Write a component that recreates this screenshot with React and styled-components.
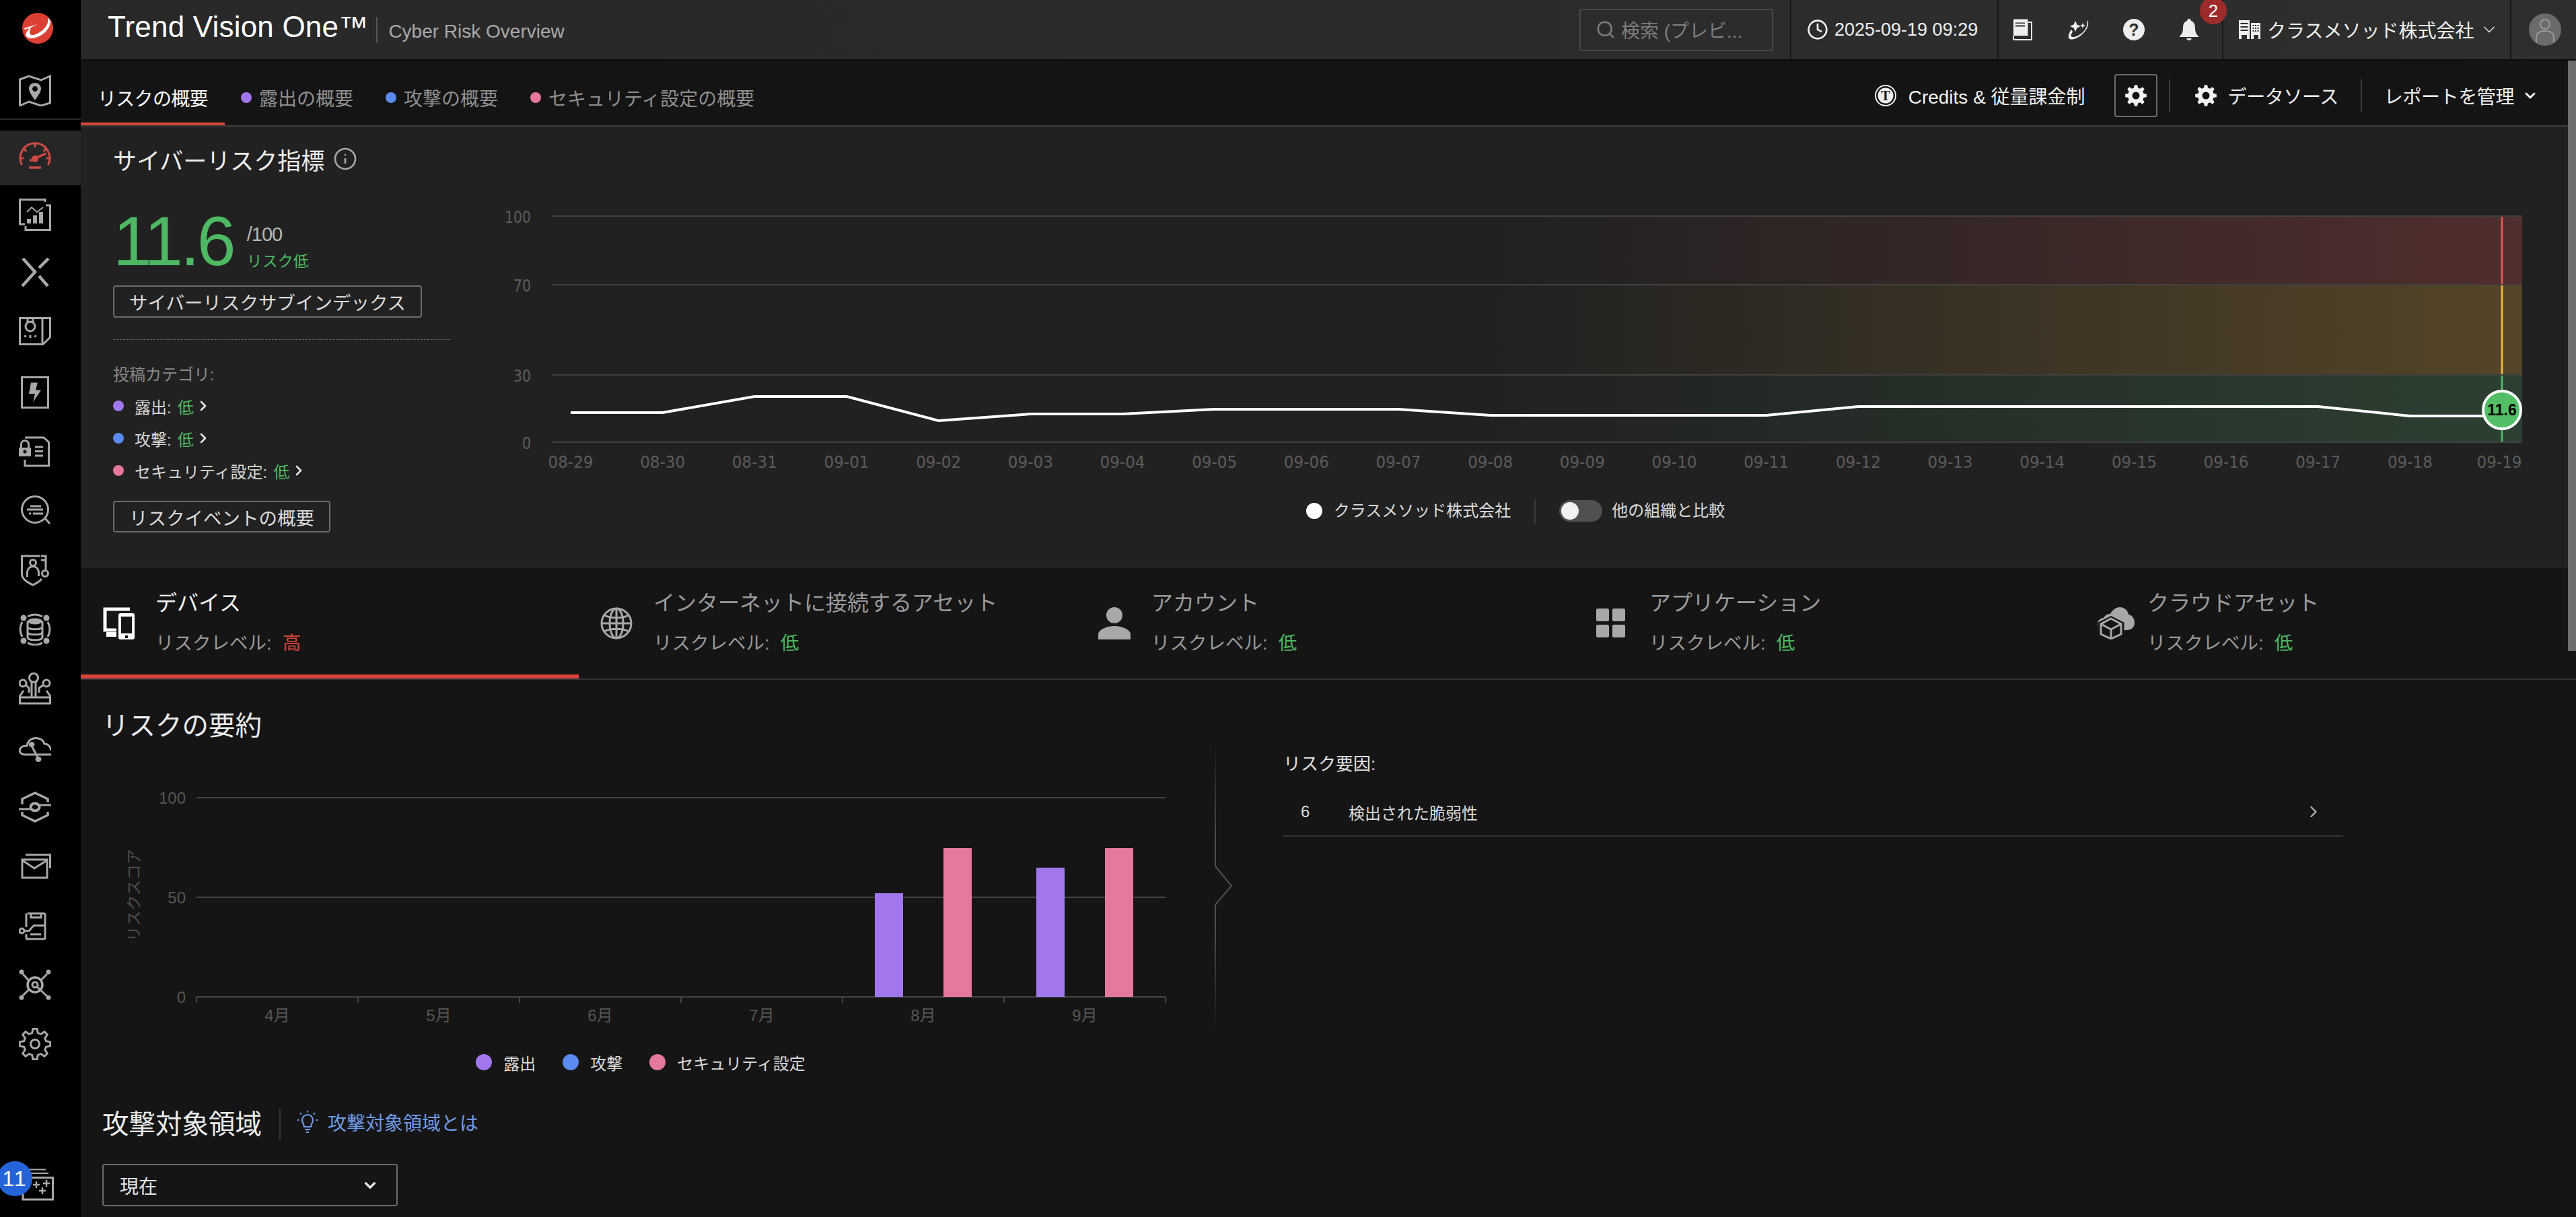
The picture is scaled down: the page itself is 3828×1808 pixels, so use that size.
import React from 'react';
import styled, { createGlobalStyle } from 'styled-components';
import { ChevronDown, ChevronRight, Search, Clock, Info } from 'lucide-react';

const GlobalStyle = createGlobalStyle`
    html, body {
        margin: 0;
        padding: 0;
        background: #151515;
        overflow: hidden;
    }
    * { box-sizing: border-box; }
    body {
        font-family: "Liberation Sans", "Noto Sans CJK JP", sans-serif;
        color: #e6e6e6;
    }
`;

const PURPLE = '#a277ee';
const BLUE = '#5b8af0';
const PINK = '#e5789f';
const GREEN = '#4eb862';
const RED = '#d9453b';

const Page = styled.div`
    display: flex;
    width: 3828px;
    height: 1808px;
    overflow: hidden;
    position: relative;
`;

/* sidebar */
const Sidebar = styled.nav`
    width: 120px;
    height: 1808px;
    flex: none;
    background: #000;
    display: flex;
    flex-direction: column;
    color: #a8a8a8;
`;
const LogoSlot = styled.div`
    height: 84px;
    display: flex;
    align-items: center;
    padding-left: 33px;
`;
const PinnedSlot = styled.div`
    height: 92px;
    padding-top: 8px;
    display: flex;
    align-items: center;
    padding-left: 28px;
`;
const SideRule = styled.div`
    height: 2px;
    background: #2a2a2a;
    margin-bottom: 16px;
`;
const ActiveSlot = styled.div`
    height: 81px;
    padding: 0 0 1px 28px;
    display: flex;
    align-items: center;
    background: #262626;
    color: #cf4b45;
`;
const NavSlot = styled.div`
    height: 88px;
    display: flex;
    align-items: center;
    padding-left: 28px;
`;
const TraySlot = styled.div`
    margin-top: auto;
    padding: 0 0 24px 32px;
    position: relative;
`;
const TrayBadge = styled.div`
    position: absolute;
    left: -4px;
    top: -11px;
    width: 52px;
    height: 52px;
    border-radius: 50%;
    background: #2563d8;
    color: #fff;
    font-size: 32px;
    line-height: 52px;
    text-align: center;
    letter-spacing: 2px;
`;
const NavIcon = styled.svg.attrs({ viewBox: '0 0 48 48', width: 48, height: 48 })`
    display: block;
    fill: none;
    stroke: currentColor;
    stroke-width: 3;
`;

/* top bar */
const Main = styled.div`
    flex: 1;
    min-width: 0;
    display: flex;
    flex-direction: column;
`;
const TopBar = styled.header`
    height: 90px;
    flex: none;
    display: flex;
    align-items: stretch;
    background: linear-gradient(90deg, #282828, #2e2e2e);
    border-bottom: 2px solid #0d0d0d;
    padding-left: 40px;
`;
const Brand = styled.div`
    display: flex;
    align-items: center;
    flex: 1;
`;
const BrandName = styled.div`
    font-size: 44px;
    line-height: 50px;
    color: #fff;
    letter-spacing: 0.2px;
    margin-top: -8px;
`;
const BrandRule = styled.div`
    width: 2px;
    height: 39px;
    background: #555;
    margin: 0 16px 0 12px;
`;
const BrandPage = styled.div`
    font-size: 28px;
    color: #a9a9a9;
    margin-top: 5px;
`;
const TopCell = styled.div`
    display: flex;
    align-items: center;
    border-right: 2px solid #171717;
    width: ${(p) => p.$w}px;
    padding-left: ${(p) => p.$pad || 0}px;
    gap: ${(p) => p.$gap || 0}px;
    flex: none;
    &:last-child { border-right: 0; }
`;
const SearchBox = styled.div`
    width: 288px;
    height: 63px;
    border: 2px solid #484848;
    border-radius: 4px;
    display: flex;
    align-items: center;
    padding-left: 22px;
    gap: 8px;
    color: #7d7d7d;
    font-size: 28px;
    white-space: nowrap;
`;
const DateText = styled.span`
    font-size: 27px;
    color: #f0f0f0;
    white-space: nowrap;
`;
const TopIcon = styled.div`
    width: 32px;
    height: 32px;
    position: relative;
    flex: none;
    color: #eee;
`;
const NoticeBadge = styled.div`
    position: absolute;
    left: 32px;
    top: -32px;
    width: 40px;
    height: 40px;
    border-radius: 50%;
    background: #9c2b2a;
    color: #fff;
    font-size: 26px;
    line-height: 40px;
    text-align: center;
`;
const OrgName = styled.span`
    font-size: 28px;
    color: #f0f0f0;
    white-space: nowrap;
`;

/* sub navigation */
const SubNav = styled.div`
    height: 98px;
    flex: none;
    display: flex;
    background: #141414;
    border-bottom: 2px solid #3c3c3c;
`;
const ViewTab = styled.div`
    display: flex;
    align-items: center;
    gap: 11px;
    padding: 14px 24px 0;
    font-size: 28px;
    color: ${(p) => (p.$active ? '#fff' : '#8f8f8f')};
    box-shadow: ${(p) => (p.$active ? `inset 0 -4px 0 ${RED}` : 'none')};
    ${(p) => p.$active && 'width: 214px; padding-left: 25px; letter-spacing: -0.7px;'}
    white-space: nowrap;
`;
const Dot = styled.span`
    width: ${(p) => p.$size || 16}px;
    height: ${(p) => p.$size || 16}px;
    border-radius: 50%;
    background: ${(p) => p.$color};
    flex: none;
`;
const SubActions = styled.div`
    margin-left: auto;
    display: flex;
    align-items: center;
    padding: 8px 56px 0 0;
    font-size: 28px;
    color: #f0f0f0;
`;
const ActionItem = styled.div`
    display: flex;
    align-items: center;
    gap: ${(p) => p.$gap || 17}px;
    white-space: nowrap;
    letter-spacing: ${(p) => (p.$tight ? '-0.4px' : '0')};
`;
const GearButton = styled.div`
    width: 64px;
    height: 64px;
    border: 2px solid #6b6b6b;
    border-radius: 4px;
    display: flex;
    align-items: center;
    justify-content: center;
    margin: 0 17px 0 43px;
`;
const ActionRule = styled.div`
    width: 2px;
    height: 48px;
    background: #3f3f3f;
    margin: ${(p) => p.$margin};
`;

/* cyber risk card */
const RiskCard = styled.section`
    height: 656px;
    flex: none;
    display: flex;
    background: #212121;
    padding-left: 48px;
`;
const RiskLeft = styled.div`
    width: 552px;
    flex: none;
    display: flex;
    flex-direction: column;
    align-items: flex-start;
    padding-top: 23px;
`;
const CardTitle = styled.div`
    height: 50px;
    display: flex;
    align-items: center;
    gap: 13px;
    font-size: 35px;
    color: #ececec;
    white-space: nowrap;
`;
const Score = styled.div`
    display: flex;
    height: 116px;
    margin-top: 39px;
`;
const ScoreValue = styled.div`
    font-size: 104px;
    line-height: 116px;
    color: ${GREEN};
    letter-spacing: -4px;
`;
const ScoreSide = styled.div`
    margin-left: 20px;
    padding-top: 30px;
    display: flex;
    flex-direction: column;
    gap: 6px;
`;
const ScoreMax = styled.div`
    font-size: 29px;
    line-height: 36px;
    color: #b8b8b8;
    letter-spacing: -1px;
`;
const ScoreLabel = styled.div`
    font-size: 23px;
    line-height: 32px;
    color: ${GREEN};
`;
const OutlineButton = styled.div`
    height: ${(p) => p.$h || 48}px;
    border: 2px solid #6b6b6b;
    border-radius: 4px;
    padding: 0 22px;
    display: flex;
    align-items: center;
    font-size: 27.5px;
    color: #dcdcdc;
    white-space: nowrap;
    margin-top: ${(p) => p.$mt || 0}px;
`;
const DashedRule = styled.div`
    width: 500px;
    border-top: 1px dashed #6a6a6a;
    margin-top: 32px;
`;
const CategoryHead = styled.div`
    font-size: 24px;
    line-height: 32px;
    color: #8a8a8a;
    margin: 36px 0 6px;
`;
const CategoryRow = styled.div`
    display: flex;
    align-items: center;
    height: 48px;
    font-size: 24px;
    color: #d8d8d8;
    white-space: nowrap;
`;
const CategoryLabel = styled.span`
    margin-left: 16px;
`;
const LevelValue = styled.span`
    color: ${(p) => p.$color};
    margin-left: ${(p) => p.$ml || 9}px;
`;
const RiskRight = styled.div`
    flex: 1;
    padding-top: 92px;
    display: flex;
    flex-direction: column;
`;
const ChartLegend = styled.div`
    width: 3040px;
    padding-left: 24px;
    display: flex;
    justify-content: center;
    align-items: center;
    margin-top: 29px;
    font-size: 24px;
    line-height: 40px;
    color: #dcdcdc;
`;
const LegendItem = styled.div`
    display: flex;
    align-items: center;
    gap: ${(p) => p.$gap || 17}px;
    white-space: nowrap;
`;
const LegendRule = styled.div`
    width: 2px;
    height: 36px;
    background: #3a3a3a;
    margin: 0 35px;
`;
const Toggle = styled.div`
    width: 64px;
    height: 32px;
    border-radius: 16px;
    background: #505050;
    padding: 3px;
`;
const ToggleKnob = styled.div`
    width: 26px;
    height: 26px;
    border-radius: 50%;
    background: #f2f2f2;
`;
const Svg = styled.svg`
    display: block;
    flex: none;
`;

/* asset tabs */
const AssetTabs = styled.div`
    height: 166px;
    flex: none;
    display: flex;
    border-bottom: 2px solid #333;
    background: #151515;
`;
const AssetTab = styled.div`
    width: 740px;
    flex: none;
    display: flex;
    align-items: center;
    padding-left: 32px;
    box-shadow: ${(p) => (p.$active ? `inset 0 -6px 0 ${RED}` : 'none')};
    color: ${(p) => (p.$active ? '#fff' : '#a8a8a8')};
`;
const AssetIconBox = styled.div`
    width: 48px;
    flex: none;
    margin-right: 31px;
    height: 48px;
    display: flex;
    align-items: center;
`;
const AssetText = styled.div`
    display: flex;
    flex-direction: column;
    gap: 20px;
    white-space: nowrap;
`;
const AssetName = styled.div`
    font-size: 32px;
    line-height: 40px;
    color: ${(p) => (p.$active ? '#f2f2f2' : '#9a9a9a')};
`;
const AssetLevel = styled.div`
    font-size: 27.5px;
    line-height: 40px;
    color: #9a9a9a;
`;

/* lower content */
const Lower = styled.div`
    flex: 1;
    min-height: 0;
    background: #151515;
    padding: 43px 0 0 32px;
`;
const SummaryRow = styled.div`
    display: flex;
    align-items: flex-start;
`;
const SummaryLeft = styled.div`
    width: 1648px;
    flex: none;
`;
const SectionTitle = styled.div`
    height: 50px;
    font-size: 39.5px;
    line-height: 50px;
    color: #ececec;
    white-space: nowrap;
`;
const BarLegend = styled.div`
    width: 1600px;
    height: 50px;
    margin-top: 25px;
    display: flex;
    justify-content: center;
    align-items: center;
    gap: 40px;
    font-size: 24px;
    color: #dcdcdc;
`;
const DividerBox = styled.div`
    margin-top: 48px;
    flex: none;
`;
const Factors = styled.div`
    width: 1575px;
    margin: 62px 0 0 71px;
    flex: none;
`;
const FactorsHead = styled.div`
    font-size: 26px;
    line-height: 40px;
    color: #e0e0e0;
`;
const FactorRow = styled.div`
    height: 72px;
    margin-top: 16px;
    display: flex;
    align-items: center;
    border-bottom: 2px solid #333;
    padding: 0 30px 0 26px;
    font-size: 24px;
    color: #dcdcdc;
`;
const FactorCount = styled.span`
    width: 71px;
    font-family: "Liberation Sans", sans-serif;
`;
const FactorChevron = styled.div`
    margin-left: auto;
    display: flex;
    color: #b5b5b5;
`;
const SurfaceHead = styled.div`
    display: flex;
    align-items: center;
    height: 50px;
    margin-top: 42px;
`;
const SurfaceRule = styled.div`
    width: 2px;
    height: 47px;
    background: #333;
    margin: 0 24px 0 26px;
`;
const SurfaceLink = styled.div`
    display: flex;
    align-items: center;
    gap: 14px;
    font-size: 28px;
    color: #6f9be8;
    white-space: nowrap;
    margin-top: -6px;
`;
const SelectBox = styled.div`
    width: 439px;
    height: 63px;
    margin-top: 34px;
    border: 2px solid #6b6b6b;
    border-radius: 4px;
    display: flex;
    align-items: center;
    justify-content: space-between;
    padding: 0 26px 0 24px;
    font-size: 28px;
    color: #e6e6e6;
`;
const ScrollThumb = styled.div`
    position: absolute;
    right: 0;
    top: 90px;
    width: 12px;
    height: 877px;
    background: #6d6d6d;
`;

/* drawings */
function gearPath(cx, cy, ro, ri, n) {
    const step = (Math.PI * 2) / n;
    let d = '';
    for (let i = 0; i < n; i++) {
        const a = i * step - Math.PI / 2;
        const pts = [
            [ri, a - step * 0.32],
            [ro, a - step * 0.17],
            [ro, a + step * 0.17],
            [ri, a + step * 0.32],
        ];
        pts.forEach(([r, t], j) => {
            const x = (cx + r * Math.cos(t)).toFixed(2);
            const y = (cy + r * Math.sin(t)).toFixed(2);
            d += `${i === 0 && j === 0 ? 'M' : 'L'}${x} ${y} `;
        });
    }
    return d + 'Z';
}

const Logo = () => (
    <svg viewBox="0 0 46 46" width="46" height="46">
        <circle cx="23" cy="23" r="23" fill="#dc3f33" />
        <path d="M38 8 C45 11 42 21 34 29 C25 37 11 41 6 35 C4 32 7 27 13 20 L11.5 27 C10 31 12 33 16 33 C25 32 41 20 38 8Z" fill="#fff" />
        <path d="M3 23 L22 17 L13 22 L4 25Z" fill="#fff" />
    </svg>
);

const MapIcon = () => (
    <NavIcon>
        <path d="M1.5 8 L15 3 L33 9 L46.5 3 V43 L33 47 L15 41 L1.5 47Z" />
        <path d="M24 13 C29 13 33 17 33 21.5 C33 27 27 34 24 39 C21 34 15 27 15 21.5 C15 17 19 13 24 13Z M24 18 a4 4 0 1 0 0.01 0Z" fill="currentColor" fillRule="evenodd" stroke="none" />
    </NavIcon>
);
const GaugeIcon = () => (
    <NavIcon>
        <path d="M4.5 35 A22 22 0 1 1 43.5 35" />
        <path d="M24 3 V9 M8 11 L11 15 M40 11 L37 15 M2 25 H7 M41 25 H46" />
        <circle cx="24" cy="26" r="5" fill="currentColor" stroke="none" />
        <path d="M16 29 L40 18" strokeWidth="3.5" />
        <path d="M15 39 H33" strokeWidth="3.5" />
    </NavIcon>
);
const ReportIcon = () => (
    <NavIcon>
        <path d="M39 5 V1.5 H1.5 V38 H9" />
        <path d="M40 10 H46.5 V46.5 H10 V41" />
        <path d="M12 30 H18 V37 H12Z M21 25 H27 V37 H21Z M30 20 H36 V37 H30Z" fill="currentColor" stroke="none" />
        <path d="M12 20 L19 13 L27 20 L36 13" strokeWidth="2" />
    </NavIcon>
);
const CrossIcon = () => (
    <NavIcon>
        <path d="M6 1 L24 21 L5 42 M44 1 L30 15 M30 27 L43 42" strokeWidth="4.5" />
    </NavIcon>
);
const BulbDocIcon = () => (
    <NavIcon>
        <path d="M1.5 1.5 H46.5 V30 L36 40.5 H1.5Z M35 1.5 V40" />
        <circle cx="17" cy="14" r="7" />
        <path d="M13 8 V2 M21 8 V2 M10 30 L9 27 M17 31 V27 M24 30 L25 27" />
    </NavIcon>
);
const BoltIcon = () => (
    <NavIcon>
        <path d="M4.5 1.5 H43.5 V46.5 H4.5Z" />
        <path d="M18 9.5 H28 L25 20.5 H33 L21 38.5 L24 26 H15Z" fill="currentColor" stroke="none" />
    </NavIcon>
);
const IdLockIcon = () => (
    <NavIcon>
        <path d="M9 3 H37 L44.5 10 V45 H9 V36" />
        <path d="M0 18 H18 V31 H0Z" fill="currentColor" stroke="none" />
        <path d="M3.5 18 V13 A5.5 5.5 0 0 1 14.5 13 V18" />
        <circle cx="9" cy="24" r="2.5" fill="#000" stroke="none" />
        <path d="M24 17 H36 M24 23.5 H36 M24 30 H36" />
    </NavIcon>
);
const ChatSearchIcon = () => (
    <NavIcon>
        <circle cx="24" cy="22" r="19.5" />
        <path d="M39 35 L46 43" />
        <path d="M12 22 H36 M17 17 H33 M15 28 H18 M21 28 H36" />
    </NavIcon>
);
const ShieldUserIcon = () => (
    <NavIcon>
        <path d="M32 3 H4.5 V30 C4.5 38 16 44 21 46 C25 44 30 42 34 37" />
        <path d="M33 9 H40 V3 H33 M40 3 V23" />
        <circle cx="39" cy="29" r="4.5" />
        <circle cx="21" cy="13" r="4.5" />
        <path d="M12.5 34 V27 A8.5 8.5 0 0 1 29.5 27 V33" />
    </NavIcon>
);
const DbOrbitIcon = () => (
    <NavIcon>
        <ellipse cx="24" cy="12" rx="11" ry="4.5" fill="currentColor" stroke="none" />
        <path d="M13 12 V36 C13 41 35 41 35 36 V12 M13 20 C13 25 35 25 35 20 M13 28 C13 33 35 33 35 28" />
        <path d="M13 5 A23 23 0 0 1 35 5 M43 13 A23 23 0 0 1 43 35 M35 44 A23 23 0 0 1 13 44 M5 35 A23 23 0 0 1 5 13" />
        <circle cx="7" cy="7" r="4.5" fill="currentColor" stroke="none" />
        <circle cx="41" cy="7" r="4.5" fill="currentColor" stroke="none" />
        <circle cx="7" cy="41" r="4.5" fill="currentColor" stroke="none" />
        <circle cx="41" cy="41" r="4.5" fill="currentColor" stroke="none" />
    </NavIcon>
);
const TrayNodesIcon = () => (
    <NavIcon>
        <circle cx="22" cy="8" r="6.5" />
        <circle cx="6" cy="16" r="5" />
        <circle cx="41" cy="16" r="5" />
        <path d="M19 14 V36 M25 14 V36 M11 19 L15 23 V30 M36 19 L30 23 V30" />
        <path d="M7 27 L1.5 35 V46 H46.5 V35 L41 27 M1.5 37 H46.5" />
    </NavIcon>
);
const CloudKeyIcon = () => (
    <NavIcon>
        <path d="M48 34 H9 C2 34 -1 28 3 24 C5 21 9 21 12 21 C13 12 22 8 29 10 C34 11 37 15 38 18 C43 18 47 22 48 28" />
        <path d="M19 21 L29 40" />
        <ellipse cx="19" cy="19" rx="4.5" ry="4" fill="currentColor" stroke="none" />
        <ellipse cx="29" cy="41" rx="4.5" ry="4" fill="currentColor" stroke="none" />
    </NavIcon>
);
const HexEyeIcon = () => (
    <NavIcon>
        <path d="M5 20 V12 L24 3 L43 12 V17 M43 31 V36 L24 45 L5 36 V31" strokeWidth="3.5" />
        <path d="M0 27 H17 M31 21 H48" />
        <ellipse cx="24" cy="24" rx="6.5" ry="5.5" strokeWidth="4" />
    </NavIcon>
);
const MailIcon = () => (
    <NavIcon>
        <path d="M5 14 H42 V41 H5Z M5 15 L23 27 L42 15" />
        <path d="M10 7 H46.5 V27" />
    </NavIcon>
);
const DocBranchIcon = () => (
    <NavIcon>
        <path d="M13 6 H37 A2 2 0 0 1 39 8 V42 A2 2 0 0 1 37 44 H13 A2 2 0 0 1 11 42 V37 M11 26 V6" />
        <path d="M18 6 V12 H33 V6 M9 32 H15 L22 24 H39 M17 37 H33" />
        <circle cx="4.5" cy="32" r="3.5" />
    </NavIcon>
);
const HubIcon = () => (
    <NavIcon>
        <circle cx="24" cy="24" r="11" strokeWidth="3.5" />
        <circle cx="24" cy="24" r="4" />
        <path d="M27 27 L42 41 M15 18 L6 8 M33 17 L42 8 M15 31 L6 40" />
        <circle cx="4" cy="5" r="3.5" fill="currentColor" stroke="none" />
        <circle cx="44" cy="5" r="3.5" fill="currentColor" stroke="none" />
        <circle cx="4" cy="43" r="3.5" fill="currentColor" stroke="none" />
        <circle cx="44" cy="43" r="3.5" fill="currentColor" stroke="none" />
    </NavIcon>
);
const GearOutlineIcon = () => (
    <NavIcon>
        <path d={gearPath(24, 24, 23, 17, 8)} />
        <circle cx="24" cy="24" r="6.5" />
    </NavIcon>
);
const TrayIcon = () => (
    <NavIcon>
        <path d="M2 13.5 H46.5 V46 H2Z" />
        <path d="M12 1.5 H36 M4 7 H40" strokeWidth="2" />
        <path d="M17 24 H27 M22 19 V29 M32 22 H42 M37 17 V27 M26 33 H36 M31 28 V38" strokeWidth="2.5" />
    </NavIcon>
);

const navItems = [
    ReportIcon, CrossIcon, BulbDocIcon, BoltIcon, IdLockIcon, ChatSearchIcon, ShieldUserIcon,
    DbOrbitIcon, TrayNodesIcon, CloudKeyIcon, HexEyeIcon, MailIcon, DocBranchIcon, HubIcon, GearOutlineIcon,
];

const BookGlyph = () => (
    <svg viewBox="0 0 32 32" width="32" height="32">
        <path d="M1 2 A1.5 1.5 0 0 1 2.5 0.5 H22.5 V25 H3 A2 2 0 0 0 1 27Z" fill="#eee" />
        <path d="M4 5.5 H18 V7 H4Z M4 9.5 H18 V11.5 H4Z" fill="#2c2c2c" />
        <path d="M23 5 H28 V31 H3 A2 2 0 0 1 1 29 V26" fill="none" stroke="#eee" strokeWidth="2" />
    </svg>
);
const SparkGlyph = () => (
    <svg viewBox="0 0 32 32" width="32" height="32">
        <path d="M28 2 C33 5 29 17 20 24 C13 30 3 33 1 28 C0 25 2 20 5 16 L7 19 C5 22 4 25 5 26 C8 29 16 25 22 20 C27 15 30 8 28 2Z" fill="#eee" />
        <path d="M11 3 L13.5 8.5 L19 11 L13.5 13.5 L11 19 L8.5 13.5 L3 11 L8.5 8.5Z" fill="#eee" />
        <path d="M22 6 L23.2 8.8 L26 10 L23.2 11.2 L22 14 L20.8 11.2 L18 10 L20.8 8.8Z" fill="#eee" />
    </svg>
);
const HelpGlyph = () => (
    <svg viewBox="0 0 32 32" width="32" height="32">
        <circle cx="16" cy="16" r="16" fill="#eee" />
        <text x="16" y="25" textAnchor="middle" fontSize="25" fontWeight="700" fontFamily="Liberation Sans" fill="#2c2c2c">?</text>
    </svg>
);
const BellGlyph = () => (
    <svg viewBox="0 0 32 32" width="32" height="32">
        <path d="M16 0 C18 0 19 1.5 19 3 C24 5 25 9 25 14 C25 20 27 23 30 26 V27 H2 V26 C5 23 7 20 7 14 C7 9 8 5 13 3 C13 1.5 14 0 16 0Z M12 29 H20 C19 33 13 33 12 29Z" fill="#eee" />
    </svg>
);
const BuildingGlyph = () => (
    <svg viewBox="0 0 34 30" width="34" height="30">
        <path d="M1 1 H17 V29 H1Z M19 5 H33 V29 H19Z" fill="#eee" />
        <path d="M3.5 6 H14.5 M3.5 11 H14.5 M3.5 16 H14.5" stroke="#2c2c2c" strokeWidth="2" />
        <path d="M5 23 H13 V29 H5Z M23 23 H30 V29 H23Z" fill="#2c2c2c" />
        <path d="M21.5 9 H31 M21.5 13 H31 M21.5 17 H31" stroke="#2c2c2c" strokeWidth="2" strokeDasharray="2 1.5" />
    </svg>
);
const AvatarGlyph = () => (
    <svg viewBox="0 0 48 48" width="48" height="48">
        <circle cx="24" cy="24" r="24" fill="#6b6b6b" />
        <circle cx="24" cy="16" r="7" fill="none" stroke="#9a9a9a" strokeWidth="2" />
        <path d="M11 43 V36 C11 28 18 26 24 26 C30 26 37 28 37 36 V43" fill="none" stroke="#9a9a9a" strokeWidth="2" />
    </svg>
);
const CreditGlyph = () => (
    <svg viewBox="0 0 32 32" width="32" height="32">
        <circle cx="16" cy="16" r="15" fill="none" stroke="#eee" strokeWidth="2" />
        <circle cx="16" cy="16" r="11.5" fill="#eee" />
        <text x="16" y="23" textAnchor="middle" fontSize="20" fontWeight="700" fontFamily="Liberation Serif" fill="#141414">T</text>
    </svg>
);
const SolidGear = ({ bg = '#141414' }) => (
    <svg viewBox="0 0 32 32" width="32" height="32">
        <path d={gearPath(16, 16, 16, 12, 8)} fill="#f2f2f2" />
        <circle cx="16" cy="16" r="5.5" fill={bg} />
    </svg>
);
const RayBulb = () => (
    <svg viewBox="0 0 32 36" width="32" height="36" fill="none" stroke="currentColor" strokeWidth="2.2">
        <path d="M11 25 C11 21 8 19 8 15 A8 8 0 0 1 24 15 C24 19 21 21 21 25Z" />
        <path d="M12 29 H20 M14 33 H18" />
        <path d="M16 1 V3.5 M5 4.5 L7 6.5 M27 4.5 L25 6.5 M1 15 H3.5 M28.5 15 H31" />
    </svg>
);

const DeviceIcon = () => (
    <svg viewBox="0 0 48 48" width="48" height="48">
        <path d="M41 3 H4 V34 H21" fill="none" stroke="currentColor" strokeWidth="5" />
        <path d="M6 37 H21 V44 H6Z" fill="currentColor" />
        <rect x="24" y="9" width="24" height="39" rx="3" fill="currentColor" />
        <rect x="28" y="14" width="16" height="25" fill="#151515" />
        <rect x="34" y="42" width="4" height="4" fill="#151515" />
    </svg>
);
const GlobeIcon = () => (
    <svg viewBox="0 0 48 48" width="48" height="48" fill="none" stroke="currentColor" strokeWidth="3">
        <circle cx="24" cy="24" r="22" />
        <ellipse cx="24" cy="24" rx="10" ry="22" />
        <path d="M2 24 H46 M24 2 V46 M6 12 C15 17 33 17 42 12 M6 36 C15 31 33 31 42 36" />
    </svg>
);
const PersonIcon = () => (
    <svg viewBox="0 0 48 48" width="48" height="48" fill="currentColor">
        <circle cx="24" cy="12" r="12" />
        <path d="M0 48 V41 C0 32 15 28 24 28 C33 28 48 32 48 41 V48Z" />
    </svg>
);
const AppsIcon = () => (
    <svg viewBox="0 0 44 44" width="44" height="44" fill="currentColor">
        <rect x="0" y="0" width="19" height="19" rx="2.5" />
        <rect x="24" y="0" width="19" height="19" rx="2.5" />
        <rect x="0" y="24" width="19" height="19" rx="2.5" />
        <rect x="24" y="24" width="19" height="19" rx="2.5" />
    </svg>
);
const CloudBoxIcon = () => (
    <svg viewBox="0 0 56 48" width="56" height="48" style={{ marginLeft: 5, flex: 'none' }}>
        <path d="M12 36 C4 36 0 30 0 25 C0 20 4 16 9 16 C11 12 15 10 19 10 C22 4 28 0 33 0 C40 0 45 5 46 11 C52 12 55 18 55 23 C55 30 50 34 44 34Z" fill="currentColor" />
        <path d="M20 17 L36 25 V40 L20 48 L4 40 V25Z" fill="#151515" stroke="#151515" strokeWidth="7" />
        <path d="M20 17 L35 25 V40 L20 47 L5 40 V25Z M5 25 L20 33 L35 25 M20 33 V47" fill="none" stroke="currentColor" strokeWidth="3" />
    </svg>
);

/* charts */
const dates = ['08-29', '08-30', '08-31', '09-01', '09-02', '09-03', '09-04', '09-05', '09-06', '09-07', '09-08', '09-09', '09-10', '09-11', '09-12', '09-13', '09-14', '09-15', '09-16', '09-17', '09-18', '09-19'];
const trend = [613, 613, 589, 589, 625, 615, 615, 608, 608, 608, 617, 617, 617, 617, 604, 604, 604, 604, 604, 604, 618, 618];
const stepX = (i) => 848 + 136.67 * i;

const TrendChart = () => (
    <Svg viewBox="720 280 3040 430" width="3040" height="430">
        <defs>
            <linearGradient id="bandRed" x1="0" x2="1" y1="0" y2="0">
                <stop offset="0.48" stopColor="#212121" />
                <stop offset="1" stopColor="#502e2d" />
            </linearGradient>
            <linearGradient id="bandYellow" x1="0" x2="1" y1="0" y2="0">
                <stop offset="0.48" stopColor="#212121" />
                <stop offset="1" stopColor="#554528" />
            </linearGradient>
            <linearGradient id="bandGreen" x1="0" x2="1" y1="0" y2="0">
                <stop offset="0.48" stopColor="#212121" />
                <stop offset="1" stopColor="#2c4031" />
            </linearGradient>
        </defs>
        <rect x="820" y="321" width="2928" height="102" fill="url(#bandRed)" />
        <rect x="820" y="423" width="2928" height="134" fill="url(#bandYellow)" />
        <rect x="820" y="557" width="2928" height="100" fill="url(#bandGreen)" />
        {[321, 423, 557, 657].map((y) => (
            <line key={y} x1="820" x2="3748" y1={y} y2={y} stroke="#404040" strokeWidth="2" />
        ))}
        {[['100', 321], ['70', 423], ['30', 557], ['0', 657]].map(([t, y]) => (
            <text key={t} x="789" y={y + 10} textAnchor="end" fontSize="24" fontFamily="DejaVu Sans" fill="#5c5c5c" textLength={t.length * 13} lengthAdjust="spacingAndGlyphs">{t}</text>
        ))}
        {dates.map((d, i) => (
            <text key={d} x={i === 21 ? 3714 : stepX(i)} y="695" textAnchor="middle" fontSize="24" fontFamily="DejaVu Sans" fill="#5c5c5c" textLength="67" lengthAdjust="spacingAndGlyphs">{d}</text>
        ))}
        <polyline points={trend.map((y, i) => `${stepX(i)},${y}`).join(' ')} fill="none" stroke="#fff" strokeWidth="4" />
        <line x1="3718" x2="3718" y1="322" y2="422" stroke="#e05a56" strokeWidth="3" />
        <line x1="3718" x2="3718" y1="424" y2="556" stroke="#eeb63e" strokeWidth="3" />
        <line x1="3718" x2="3718" y1="558" y2="656" stroke={GREEN} strokeWidth="3" />
        <circle cx="3718" cy="609" r="28" fill="#52bf66" stroke="#fff" strokeWidth="4" />
        <text x="3718" y="617" textAnchor="middle" fontSize="23" fontWeight="700" fontFamily="Liberation Sans" fill="#000">11.6</text>
    </Svg>
);

const months = ['4月', '5月', '6月', '7月', '8月', '9月'];
const bars = [
    { x: 1300, top: 1329, color: PURPLE },
    { x: 1402, top: 1262, color: PINK },
    { x: 1540, top: 1291, color: PURPLE },
    { x: 1642, top: 1262, color: PINK },
];

const BarChart = () => (
    <Svg viewBox="152 1105 1638 425" width="1638" height="425">
        {[1187, 1335, 1483].map((y) => (
            <line key={y} x1="292" x2="1732" y1={y} y2={y} stroke="#444" strokeWidth="2" />
        ))}
        {[['100', 1187], ['50', 1335], ['0', 1483]].map(([t, y]) => (
            <text key={t} x="276" y={y + 9} textAnchor="end" fontSize="24" fill="#565656" fontFamily="Liberation Sans">{t}</text>
        ))}
        {[0, 1, 2, 3, 4, 5, 6].map((i) => (
            <line key={i} x1={292 + i * 240} x2={292 + i * 240} y1="1483" y2="1492" stroke="#444" strokeWidth="2" />
        ))}
        {months.map((m, i) => (
            <text key={m} x={412 + i * 240} y="1519" textAnchor="middle" fontSize="24" fill="#565656" fontFamily="Liberation Sans, Noto Sans CJK JP">{m}</text>
        ))}
        {bars.map((b) => (
            <rect key={b.x} x={b.x} y={b.top} width="42" height={1483 - b.top} fill={b.color} />
        ))}
        <text transform="translate(207 1332) rotate(-90)" textAnchor="middle" fontSize="23" fill="#4e4e4e" fontFamily="Noto Sans CJK JP">リスクスコア</text>
    </Svg>
);

const SplitDivider = () => (
    <Svg viewBox="1800 1101 36 430" width="36" height="430">
        <defs>
            <linearGradient id="fade" x1="0" x2="0" y1="0" y2="1">
                <stop offset="0" stopColor="#151515" />
                <stop offset="0.35" stopColor="#505050" />
                <stop offset="0.65" stopColor="#505050" />
                <stop offset="1" stopColor="#151515" />
            </linearGradient>
        </defs>
        <path d="M1806 1101 V1287 L1830 1316 L1806 1344 V1531" fill="none" stroke="url(#fade)" strokeWidth="2" />
    </Svg>
);

const assets = [
    { name: 'デバイス', level: '高', color: RED, icon: DeviceIcon, active: true },
    { name: 'インターネットに接続するアセット', level: '低', color: GREEN, icon: GlobeIcon },
    { name: 'アカウント', level: '低', color: GREEN, icon: PersonIcon },
    { name: 'アプリケーション', level: '低', color: GREEN, icon: AppsIcon },
    { name: 'クラウドアセット', level: '低', color: GREEN, icon: CloudBoxIcon },
];

const categories = [
    { label: '露出:', color: PURPLE },
    { label: '攻撃:', color: BLUE },
    { label: 'セキュリティ設定:', color: PINK },
];

export default function App() {
    return (
        <Page>
            <GlobalStyle />
            <Sidebar>
                <LogoSlot><Logo /></LogoSlot>
                <PinnedSlot><MapIcon /></PinnedSlot>
                <SideRule />
                <ActiveSlot><GaugeIcon /></ActiveSlot>
                {navItems.map((Icon, i) => (
                    <NavSlot key={i}><Icon /></NavSlot>
                ))}
                <TraySlot>
                    <TrayIcon />
                    <TrayBadge>11</TrayBadge>
                </TraySlot>
            </Sidebar>
            <Main>
                <TopBar>
                    <Brand>
                        <BrandName>Trend Vision One™</BrandName>
                        <BrandRule />
                        <BrandPage>Cyber Risk Overview</BrandPage>
                    </Brand>
                    <TopCell $w={338} $pad={23}>
                        <SearchBox>
                            <Search size={30} strokeWidth={2} />
                            検索 (プレビ...
                        </SearchBox>
                    </TopCell>
                    <TopCell $w={308} $pad={23} $gap={9}>
                        <Clock size={32} strokeWidth={2} color="#f0f0f0" />
                        <DateText>2025-09-19 09:29</DateText>
                    </TopCell>
                    <TopCell $w={334} $pad={21} $gap={50}>
                        <TopIcon><BookGlyph /></TopIcon>
                        <TopIcon><SparkGlyph /></TopIcon>
                        <TopIcon><HelpGlyph /></TopIcon>
                        <TopIcon>
                            <BellGlyph />
                            <NoticeBadge>2</NoticeBadge>
                        </TopIcon>
                    </TopCell>
                    <TopCell $w={428} $pad={22} $gap={9}>
                        <BuildingGlyph />
                        <OrgName>クラスメソッド株式会社</OrgName>
                        <ChevronDown size={28} strokeWidth={1.5} color="#dcdcdc" />
                    </TopCell>
                    <TopCell $w={96} $pad={26}>
                        <AvatarGlyph />
                    </TopCell>
                </TopBar>
                <SubNav>
                    <ViewTab $active>リスクの概要</ViewTab>
                    <ViewTab><Dot $color={PURPLE} />露出の概要</ViewTab>
                    <ViewTab><Dot $color={BLUE} />攻撃の概要</ViewTab>
                    <ViewTab><Dot $color={PINK} />セキュリティ設定の概要</ViewTab>
                    <SubActions>
                        <ActionItem $gap={18}><CreditGlyph />Credits &amp; 従量課金制</ActionItem>
                        <GearButton><SolidGear /></GearButton>
                        <ActionRule $margin="0 37px 0 0" />
                        <ActionItem $tight><SolidGear />データソース</ActionItem>
                        <ActionRule $margin="0 33px" />
                        <ActionItem $tight $gap={12}>レポートを管理<ChevronDown size={24} strokeWidth={3} /></ActionItem>
                    </SubActions>
                </SubNav>
                <RiskCard>
                    <RiskLeft>
                        <CardTitle>サイバーリスク指標<Info size={36} strokeWidth={1.8} color="#a8a8a8" /></CardTitle>
                        <Score>
                            <ScoreValue>11.6</ScoreValue>
                            <ScoreSide>
                                <ScoreMax>/100</ScoreMax>
                                <ScoreLabel>リスク低</ScoreLabel>
                            </ScoreSide>
                        </Score>
                        <OutlineButton $mt={8}>サイバーリスクサブインデックス</OutlineButton>
                        <DashedRule />
                        <CategoryHead>投稿カテゴリ:</CategoryHead>
                        {categories.map((c) => (
                            <CategoryRow key={c.label}>
                                <Dot $color={c.color} />
                                <CategoryLabel>{c.label}</CategoryLabel>
                                <LevelValue $color={GREEN}>低</LevelValue>
                                <ChevronRight size={24} strokeWidth={2.6} color="#e6e6e6" style={{ marginLeft: 2 }} />
                            </CategoryRow>
                        ))}
                        <OutlineButton $mt={21} $h={47}>リスクイベントの概要</OutlineButton>
                    </RiskLeft>
                    <RiskRight>
                        <TrendChart />
                        <ChartLegend>
                            <LegendItem><Dot $color="#fff" $size={24} />クラスメソッド株式会社</LegendItem>
                            <LegendRule />
                            <LegendItem $gap={14}>
                                <Toggle><ToggleKnob /></Toggle>
                                他の組織と比較
                            </LegendItem>
                        </ChartLegend>
                    </RiskRight>
                </RiskCard>
                <AssetTabs>
                    {assets.map((a) => (
                        <AssetTab key={a.name} $active={a.active}>
                            <AssetIconBox><a.icon /></AssetIconBox>
                            <AssetText>
                                <AssetName $active={a.active}>{a.name}</AssetName>
                                <AssetLevel>
                                    リスクレベル:
                                    <LevelValue $color={a.color} $ml={16}>{a.level}</LevelValue>
                                </AssetLevel>
                            </AssetText>
                        </AssetTab>
                    ))}
                </AssetTabs>
                <Lower>
                    <SummaryRow>
                        <SummaryLeft>
                            <SectionTitle>リスクの要約</SectionTitle>
                            <BarChart />
                            <BarLegend>
                                <LegendItem><Dot $color={PURPLE} $size={24} />露出</LegendItem>
                                <LegendItem><Dot $color={BLUE} $size={24} />攻撃</LegendItem>
                                <LegendItem><Dot $color={PINK} $size={24} />セキュリティ設定</LegendItem>
                            </BarLegend>
                        </SummaryLeft>
                        <DividerBox><SplitDivider /></DividerBox>
                        <Factors>
                            <FactorsHead>リスク要因:</FactorsHead>
                            <FactorRow>
                                <FactorCount>6</FactorCount>
                                検出された脆弱性
                                <FactorChevron><ChevronRight size={28} strokeWidth={2} /></FactorChevron>
                            </FactorRow>
                        </Factors>
                    </SummaryRow>
                    <SurfaceHead>
                        <SectionTitle>攻撃対象領域</SectionTitle>
                        <SurfaceRule />
                        <SurfaceLink>
                            <RayBulb />
                            攻撃対象領域とは
                        </SurfaceLink>
                    </SurfaceHead>
                    <SelectBox>
                        現在
                        <ChevronDown size={26} strokeWidth={3} />
                    </SelectBox>
                </Lower>
            </Main>
            <ScrollThumb />
        </Page>
    );
}
